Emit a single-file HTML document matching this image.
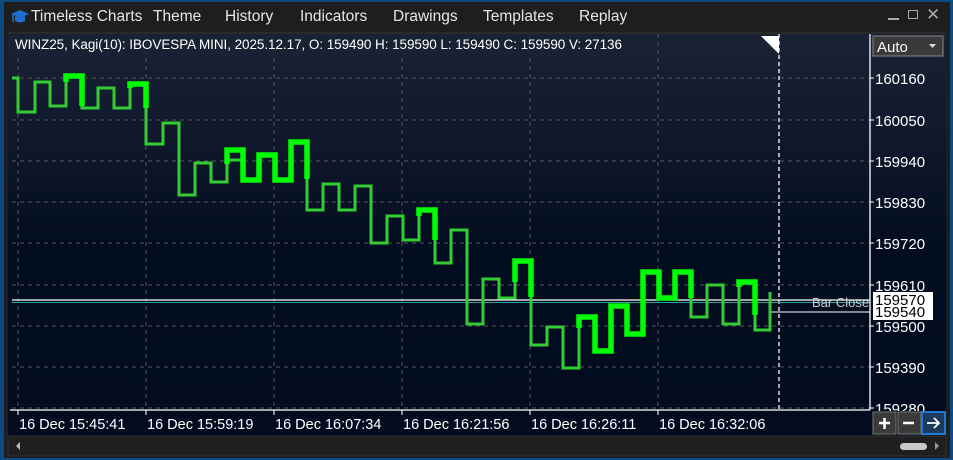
<!DOCTYPE html>
<html><head><meta charset="utf-8"><style>
body{margin:0;width:953px;height:460px;overflow:hidden;background:#0d4a82;font-family:"Liberation Sans",sans-serif;}
.win{position:absolute;left:4px;top:2px;width:946px;height:456px;background:#1e1e1e;}
.menu{position:absolute;top:0;left:0;height:30px;width:946px;color:#e6e6e6;font-size:15.5px;}
.menu span{position:absolute;top:6px;white-space:nowrap;}
</style></head><body>
<div class="win">
<div class="menu">
<svg style="position:absolute;left:6px;top:6px" width="20" height="18" viewBox="0 0 20 18"><path d="M1 6 L10 2 L19 6 L10 10Z" fill="#1e6fd0"/><path d="M5 8 V13 Q10 16 15 13 V8 L10 10Z" fill="#1e6fd0"/><path d="M3 7 V14" stroke="#1e6fd0" stroke-width="1.5"/></svg>
<span style="left:27px">Timeless Charts</span><span style="left:149px">Theme</span><span style="left:221px">History</span><span style="left:296px">Indicators</span><span style="left:389px">Drawings</span><span style="left:479px">Templates</span><span style="left:575px">Replay</span>
<span style="left:884px;top:16px;width:11px;height:2px;background:#aaa"></span>
<span style="left:904px;top:8px;width:8px;height:7px;border:1.5px solid #aaa"></span>
<span style="left:922px;top:3px;color:#aaa;font-size:17px">✕</span>
</div>
</div>
<svg style="position:absolute;left:0;top:0" width="953" height="460">
<defs><linearGradient id="g" x1="0" y1="0" x2="0" y2="1"><stop offset="0" stop-color="#1a2335"/><stop offset="0.55" stop-color="#030d20"/><stop offset="1" stop-color="#020c1e"/></linearGradient></defs>
<rect x="8" y="32" width="938" height="404" fill="url(#g)"/>
<rect x="8" y="32" width="938" height="2" fill="#2a2a2a"/>
<g stroke="#555" stroke-dasharray="4,4" stroke-width="1">
<path d="M12 78H870M12 120H870M12 161H870M12 202H870M12 243H870M12 285H870M12 326H870M12 367H870M12 408H870"/>
<path d="M18 34V410M146 34V410M274 34V410M402 34V410M530 34V410M658 34V410"/>
</g>
<path d="M779 34V410" stroke="#fff" stroke-dasharray="4,3" stroke-width="1.3"/>
<path d="M761 36H779V54Z" fill="#fff"/>
<path d="M12 300H870" stroke="#fff" stroke-width="1.3"/>
<path d="M12 302.5H870" stroke="#2aa39a" stroke-width="1"/>
<path d="M771 312H870" stroke="#fff" stroke-width="1"/>
<g fill="none" stroke="#33cc33" stroke-width="3" stroke-linejoin="miter">
<polyline points="12,78 18,78 18,112 35,112 35,82 50,82 50,106 66,106 66,80 66,76 82,76 82,108 98,108 98,88 114,88 114,108 130,108 130,84 146,84 146,144 163,144 163,123 179,123 179,195 195,195 195,163 211,163 211,182 227,182 227,160 243,160 243,180 259,180 259,155 275,155 275,180 291,180 291,142 307,142 307,210 323,210 323,184 339,184 339,210 355,210 355,186 371,186 371,243 387,243 387,216 403,216 403,240 419,240 419,210 435,210 435,263 451,263 451,230 467,230 467,324 483,324 483,279 499,279 499,298 515,298 515,261 531,261 531,345 547,345 547,327 563,327 563,368 579,368 579,317 595,317 595,351 611,351 611,306 627,306 627,334 643,334 643,272 659,272 659,298 675,298 675,272 691,272 691,317 707,317 707,285 723,285 723,324 739,324 739,282 755,282 755,330 770,330 770,292"/>
</g>
<g fill="none" stroke="#00ff00" stroke-width="5.5" stroke-linejoin="miter">
<polyline points="66,82 66,76 82,76 82,106"/>
<polyline points="130,88 130,84 146,84 146,108"/>
<polyline points="227,164 227,150 243,150 243,180 259,180 259,155 275,155 275,180 291,180 291,142 307,142 307,179"/>
<polyline points="419,216 419,210 435,210 435,240"/>
<polyline points="515,282 515,261 531,261 531,297"/>
<polyline points="579,328 579,317 595,317 595,351 611,351 611,306 627,306 627,334 643,334 643,272 659,272 659,298 675,298 675,272 691,272 691,298"/>
<polyline points="739,287 739,282 755,282 755,315"/>
</g>
<rect x="12" y="34" width="620" height="20" fill="#1a2232" opacity="0.85"/>
<g font-family="Liberation Sans, sans-serif" font-size="13.5" fill="#fff">
<text x="15" y="49" textLength="607">WINZ25, Kagi(10): IBOVESPA MINI, 2025.12.17, O: 159490 H: 159590 L: 159490 C: 159590 V: 27136</text>
<g font-size="15"><text x="875" y="84">160160</text><text x="875" y="126">160050</text><text x="875" y="167">159940</text><text x="875" y="208">159830</text><text x="875" y="249">159720</text><text x="875" y="291">159610</text><text x="875" y="332">159500</text><text x="875" y="373">159390</text><text x="875" y="414">159280</text></g>
<rect x="870" y="411" width="76" height="25" fill="#020c1e"/>
<rect x="873" y="292" width="60" height="28" fill="#fff"/>
<text x="875" y="305" fill="#000" font-size="15">159570</text>
<text x="875" y="317" fill="#000" font-size="15">159540</text>
<text x="812" y="307" fill="#ccc" font-size="13">Bar Close</text>
<g font-size="14.5"><text x="19" y="429">16 Dec 15:45:41</text><text x="147" y="429">16 Dec 15:59:19</text><text x="275" y="429">16 Dec 16:07:34</text><text x="403" y="429">16 Dec 16:21:56</text><text x="531" y="429">16 Dec 16:26:11</text><text x="659" y="429">16 Dec 16:32:06</text></g>
</g>
<path d="M870 34V410M10 410H870" stroke="#fff" stroke-width="1.3"/>
<path d="M18 410v5M146 410v5M274 410v5M402 410v5M530 410v5M658 410v5" stroke="#fff"/>
<path d="M870 78h4M870 120h4M870 161h4M870 202h4M870 243h4M870 285h4M870 326h4M870 367h4M870 408h4" stroke="#fff"/>
<rect x="873" y="36" width="70" height="20" fill="#3a3a3a" stroke="#888"/>
<text x="877" y="52" font-family="Liberation Sans" font-size="15" fill="#fff">Auto</text>
<path d="M929 44h7l-3.5 4z" fill="#ddd"/>
<rect x="873" y="412" width="23" height="22" fill="#3a3a3a" stroke="#777"/>
<rect x="898" y="412" width="23" height="22" fill="#3a3a3a" stroke="#777"/>
<rect x="922" y="412" width="23" height="22" fill="#1f3a5a" stroke="#1e7ad8" stroke-width="2"/>
<path d="M879 423h11M884.5 418v11M903 423h11" stroke="#fff" stroke-width="2.5"/>
<path d="M927 423h12M934 418l5 5-5 5" stroke="#fff" stroke-width="1.8" fill="none"/>
<rect x="8" y="436" width="938" height="20" fill="#1f1f1f" stroke="#333"/>
<path d="M16 446l4-4v8z" fill="#bbb"/>
<rect x="900" y="443" width="27" height="7" rx="3.5" fill="#c8c8c8"/>
<path d="M935 442l4 4-4 4z" fill="#999"/>
</svg>
</body></html>
